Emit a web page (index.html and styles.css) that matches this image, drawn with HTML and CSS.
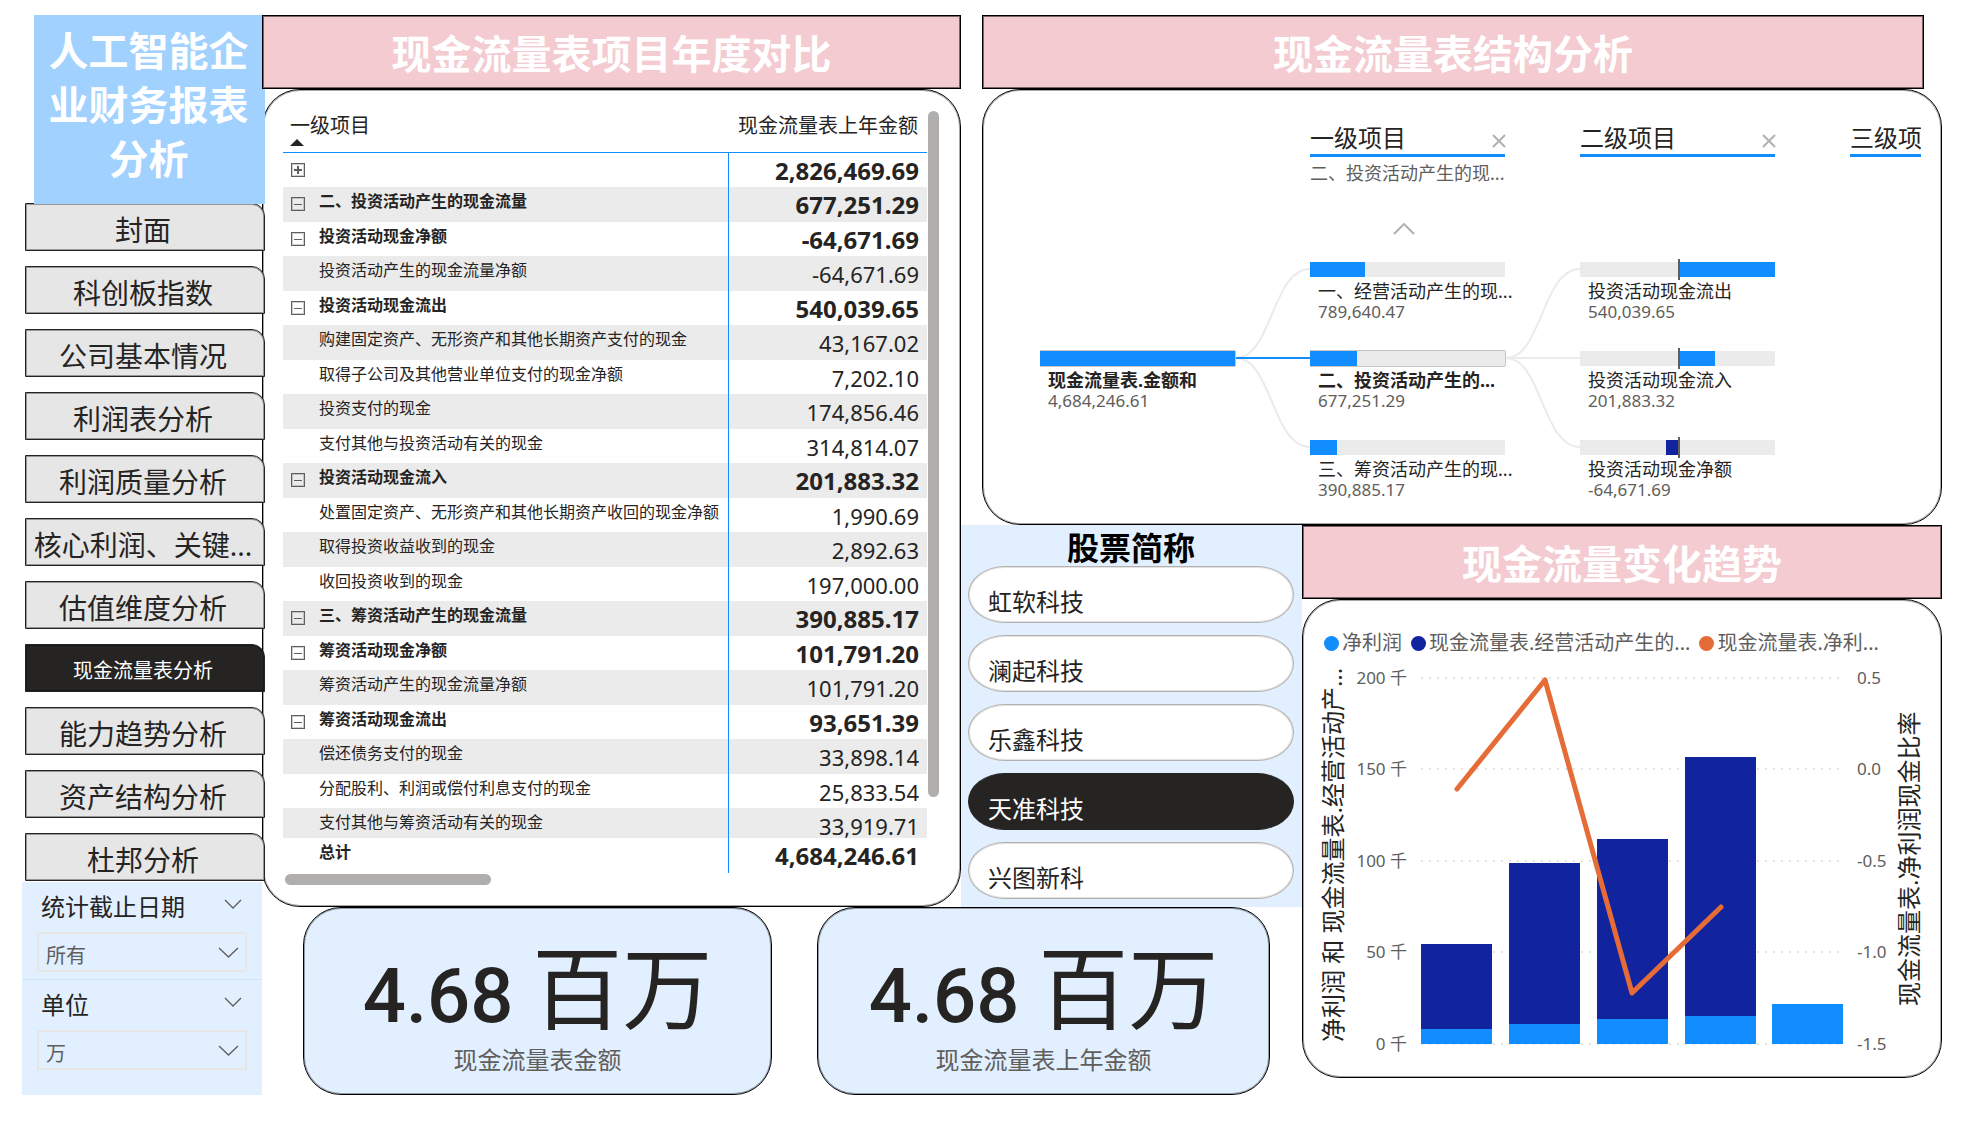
FILE: index.html
```html
<!DOCTYPE html>
<html lang="zh-CN">
<head>
<meta charset="utf-8">
<meta name="viewport" content="width=device-width, initial-scale=1">
<title>人工智能企业财务报表分析</title>
<link rel="stylesheet" href="styles.css">
</head>
<body>
<div class="page">
  <aside class="sidebar">
    <h1 class="brand">人工智能企业财务报表分析</h1>
    <nav class="nav">
      <button type="button" class="nav-item">封面</button>
      <button type="button" class="nav-item">科创板指数</button>
      <button type="button" class="nav-item">公司基本情况</button>
      <button type="button" class="nav-item">利润表分析</button>
      <button type="button" class="nav-item">利润质量分析</button>
      <button type="button" class="nav-item">核心利润、关键...</button>
      <button type="button" class="nav-item">估值维度分析</button>
      <button type="button" class="nav-item is-active">现金流量表分析</button>
      <button type="button" class="nav-item">能力趋势分析</button>
      <button type="button" class="nav-item">资产结构分析</button>
      <button type="button" class="nav-item">杜邦分析</button>
    </nav>
    <div class="filters">
      <div class="filter">
        <div class="filter-head">
          <label for="date">统计截止日期</label>
          <svg width="18" height="10" viewBox="0 0 18 10"><path d="M1 1l8 8 8-8"/></svg>
        </div>
        <div class="select-box">
          <select id="date"><option>所有</option></select>
          <svg width="21" height="11" viewBox="0 0 21 11"><path d="M1 1l9.500 9L20 1"/></svg>
        </div>
      </div>
      <div class="filter">
        <div class="filter-head">
          <label for="unit">单位</label>
          <svg width="18" height="10" viewBox="0 0 18 10"><path d="M1 1l8 8 8-8"/></svg>
        </div>
        <div class="select-box">
          <select id="unit"><option>万</option></select>
          <svg width="21" height="11" viewBox="0 0 21 11"><path d="M1 1l9.500 9L20 1"/></svg>
        </div>
      </div>
    </div>
  </aside>

  <main class="board">
    <section class="compare">
      <h2 class="banner">现金流量表项目年度对比</h2>
      <div class="panel compare-panel">
        <table class="matrix">
          <colgroup><col class="col-toggle"><col><col class="col-value"></colgroup>
          <thead>
            <tr>
              <th colspan="2" scope="col">一级项目<svg width="14" height="7" viewBox="0 0 14 7"><path d="M0 7l7-7 7 7z"/></svg></th>
              <th scope="col" class="value">现金流量表上年金额</th>
            </tr>
          </thead>
          <tbody>
            <tr class="group"><td><button type="button" class="toggle plus" aria-label="展开"></button></td><th scope="row"></th><td class="value">2,826,469.69</td></tr>
            <tr class="group"><td><button type="button" class="toggle" aria-label="折叠"></button></td><th scope="row">二、投资活动产生的现金流量</th><td class="value">677,251.29</td></tr>
            <tr class="group"><td><button type="button" class="toggle" aria-label="折叠"></button></td><th scope="row">投资活动现金净额</th><td class="value">-64,671.69</td></tr>
            <tr><td></td><th scope="row">投资活动产生的现金流量净额</th><td class="value">-64,671.69</td></tr>
            <tr class="group"><td><button type="button" class="toggle" aria-label="折叠"></button></td><th scope="row">投资活动现金流出</th><td class="value">540,039.65</td></tr>
            <tr><td></td><th scope="row">购建固定资产、无形资产和其他长期资产支付的现金</th><td class="value">43,167.02</td></tr>
            <tr><td></td><th scope="row">取得子公司及其他营业单位支付的现金净额</th><td class="value">7,202.10</td></tr>
            <tr><td></td><th scope="row">投资支付的现金</th><td class="value">174,856.46</td></tr>
            <tr><td></td><th scope="row">支付其他与投资活动有关的现金</th><td class="value">314,814.07</td></tr>
            <tr class="group"><td><button type="button" class="toggle" aria-label="折叠"></button></td><th scope="row">投资活动现金流入</th><td class="value">201,883.32</td></tr>
            <tr><td></td><th scope="row">处置固定资产、无形资产和其他长期资产收回的现金净额</th><td class="value">1,990.69</td></tr>
            <tr><td></td><th scope="row">取得投资收益收到的现金</th><td class="value">2,892.63</td></tr>
            <tr><td></td><th scope="row">收回投资收到的现金</th><td class="value">197,000.00</td></tr>
            <tr class="group"><td><button type="button" class="toggle" aria-label="折叠"></button></td><th scope="row">三、筹资活动产生的现金流量</th><td class="value">390,885.17</td></tr>
            <tr class="group"><td><button type="button" class="toggle" aria-label="折叠"></button></td><th scope="row">筹资活动现金净额</th><td class="value">101,791.20</td></tr>
            <tr><td></td><th scope="row">筹资活动产生的现金流量净额</th><td class="value">101,791.20</td></tr>
            <tr class="group"><td><button type="button" class="toggle" aria-label="折叠"></button></td><th scope="row">筹资活动现金流出</th><td class="value">93,651.39</td></tr>
            <tr><td></td><th scope="row">偿还债务支付的现金</th><td class="value">33,898.14</td></tr>
            <tr><td></td><th scope="row">分配股利、利润或偿付利息支付的现金</th><td class="value">25,833.54</td></tr>
            <tr class="last"><td></td><th scope="row">支付其他与筹资活动有关的现金</th><td class="value">33,919.71</td></tr>
          </tbody>
          <tfoot>
            <tr class="group"><td></td><th scope="row">总计</th><td class="value">4,684,246.61</td></tr>
          </tfoot>
        </table>
        <div class="scroll-y"></div>
        <div class="scroll-x"></div>
      </div>
    </section>

    <section class="structure">
      <h2 class="banner">现金流量表结构分析</h2>
      <div class="panel tree-panel">
        <div class="tree">
          <div class="level-head blank"></div>
          <div></div>
          <div class="level-head">
            <div class="level-title"><h3>一级项目</h3><button type="button" class="close" aria-label="移除"><svg width="14" height="14" viewBox="0 0 14 14"><path d="M1 1l12 12M13 1L1 13"/></svg></button></div>
            <p>二、投资活动产生的现...</p>
            <button type="button" class="up" aria-label="向上"><svg width="22" height="12" viewBox="0 0 22 12"><path d="M1 11L11 1l10 10"/></svg></button>
          </div>
          <div></div>
          <div class="level-head">
            <div class="level-title"><h3>二级项目</h3><button type="button" class="close" aria-label="移除"><svg width="14" height="14" viewBox="0 0 14 14"><path d="M1 1l12 12M13 1L1 13"/></svg></button></div>
          </div>
          <div></div>
          <div class="level-head">
            <div class="level-title"><h3>三级项目</h3></div>
          </div>

          <div class="nodes">
            <div class="node is-selected"><div class="bar"><span class="fill" style="width:100%"></span></div><strong>现金流量表.金额和</strong><span class="amount">4,684,246.61</span></div>
          </div>
          <svg class="links" width="75" height="237" viewBox="0 0 75 237"><path d="M1 96C37 96 37 7 75 7M1 96C37 96 37 185 75 185"/><path class="active" d="M1 96H75"/></svg>
          <div class="nodes">
            <div class="node"><div class="bar"><span class="fill" style="width:28%"></span></div><span>一、经营活动产生的现...</span><span class="amount">789,640.47</span></div>
            <div class="node is-selected"><div class="bar"><span class="fill" style="width:24%"></span></div><strong>二、投资活动产生的...</strong><span class="amount">677,251.29</span></div>
            <div class="node"><div class="bar"><span class="fill" style="width:14%"></span></div><span>三、筹资活动产生的现...</span><span class="amount">390,885.17</span></div>
          </div>
          <svg class="links" width="75" height="237" viewBox="0 0 75 237"><path d="M1 96C37 96 37 7 75 7M1 96H75M1 96C37 96 37 185 75 185"/></svg>
          <div class="nodes">
            <div class="node"><div class="bar signed"><span class="fill" style="margin-left:51%;width:49%"></span></div><span>投资活动现金流出</span><span class="amount">540,039.65</span></div>
            <div class="node"><div class="bar signed"><span class="fill" style="margin-left:51%;width:18%"></span></div><span>投资活动现金流入</span><span class="amount">201,883.32</span></div>
            <div class="node"><div class="bar signed"><span class="fill negative" style="margin-left:44%;width:7%"></span></div><span>投资活动现金净额</span><span class="amount">-64,671.69</span></div>
          </div>
        </div>
      </div>
    </section>

    <section class="stocks">
      <h2>股票简称</h2>
      <button type="button" class="pill">虹软科技</button>
      <button type="button" class="pill">澜起科技</button>
      <button type="button" class="pill">乐鑫科技</button>
      <button type="button" class="pill is-active">天准科技</button>
      <button type="button" class="pill">兴图新科</button>
    </section>

    <section class="trend">
      <h2 class="banner">现金流量变化趋势</h2>
      <div class="panel trend-panel">
        <ul class="legend">
          <li class="profit">净利润</li>
          <li class="operating">现金流量表.经营活动产生的...</li>
          <li class="ratio">现金流量表.净利...</li>
        </ul>
        <svg class="chart" viewBox="0 0 638 400">
          <path class="grid" d="M118 20H541M118 111H541M118 203H541M118 294H541M118 386H541"/>
          <g class="operating">
            <rect x="118" y="286" width="71" height="85"/>
            <rect x="206" y="205" width="71" height="161"/>
            <rect x="294" y="181" width="71" height="180"/>
            <rect x="382" y="99" width="71" height="259"/>
          </g>
          <g class="profit">
            <rect x="118" y="371" width="71" height="15"/>
            <rect x="206" y="366" width="71" height="20"/>
            <rect x="294" y="361" width="71" height="25"/>
            <rect x="382" y="358" width="71" height="28"/>
            <rect x="469" y="346" width="71" height="40"/>
          </g>
          <polyline class="ratio" points="154,131 242,22 329,335 418,249"/>
          <g class="ticks left">
            <text x="104" y="26">200 千</text>
            <text x="104" y="117">150 千</text>
            <text x="104" y="209">100 千</text>
            <text x="104" y="300">50 千</text>
            <text x="104" y="392">0 千</text>
          </g>
          <g class="ticks">
            <text x="554" y="26">0.5</text>
            <text x="554" y="117">0.0</text>
            <text x="554" y="209">-0.5</text>
            <text x="554" y="300">-1.0</text>
            <text x="554" y="392">-1.5</text>
          </g>
          <text class="axis" transform="translate(39 384) rotate(-90)">净利润 和 现金流量表.经营活动产...</text>
          <text class="axis" transform="translate(615 348) rotate(-90)">现金流量表.净利润现金比率</text>
        </svg>
      </div>
    </section>

    <section class="cards">
      <div class="card"><div class="figure">4.68 <span>百万</span></div><div class="caption">现金流量表金额</div></div>
      <div class="card"><div class="figure">4.68 <span>百万</span></div><div class="caption">现金流量表上年金额</div></div>
    </section>
  </main>
</div>
</body>
</html>
```
FILE: styles.css
```css
:root {
  --ink: #252423;
  --muted: #605e5c;
  --blue: #118dff;
  --navy: #12239e;
  --orange: #e66c37;
  --pale: #e1efff;
  --track: #ebebeb;
  --soft-edge: inset 0 0 0 1px rgba(0, 0, 0, .35);
}

* { box-sizing: border-box; }

body {
  margin: 0;
  background: #fff;
  color: var(--ink);
  font-family: "Noto Sans", "Noto Sans CJK SC", sans-serif;
}

h1, h2, h3, p, ul { margin: 0; padding: 0; }
ul { list-style: none; }
button, select { font: inherit; color: inherit; }
button { padding: 0; cursor: pointer; }
svg { display: block; flex: none; fill: none; }

.page {
  display: flex;
  padding: 15px 33px 26px 22px;
}

/* Sidebar */
.sidebar {
  position: relative;
  z-index: 1;
  display: flex;
  flex-direction: column;
  flex: none;
  width: 243px;
  margin-right: -3px;
}

.brand {
  position: relative;
  z-index: 1;
  height: 189px;
  margin-left: 12px;
  padding: 9px 16px 0 14px;
  background: #a0d1ff;
  color: #fff;
  font-size: 40px;
  line-height: 54px;
  text-align: center;
}

.nav {
  display: flex;
  flex-direction: column;
  gap: 15px;
  margin: -1px 0 1px 3px;
}

.nav-item {
  height: 48px;
  padding: 6px 4px 0 0;
  border: 1px solid var(--ink);
  border-radius: 0 13px 0 0;
  box-shadow: var(--soft-edge);
  background: #e6e6e6;
  font-size: 28px;
  line-height: 40px;
  white-space: nowrap;
}

.nav-item.is-active {
  background: var(--ink);
  color: #fff;
  font-size: 20px;
}

.filters {
  display: flex;
  flex-direction: column;
  flex: 1;
  margin-right: 3px;
  background: var(--pale);
}

.filter { padding: 13px 15px 7px; }
.filter:first-child { border-bottom: 1px solid #cfe4fb; }

.filter-head {
  display: flex;
  justify-content: space-between;
  margin-bottom: 13px;
  padding: 0 5px 0 4px;
  font-size: 24px;
  line-height: 24px;
}

.filter-head svg { margin-top: 4px; }

.filters svg { stroke: var(--muted); stroke-width: 1.3; }

.select-box { position: relative; }

.select-box select {
  display: block;
  width: 100%;
  height: 40px;
  padding: 6px 7px 0;
  border: 2px solid #e6e6e6;
  border-radius: 0;
  appearance: none;
  background: transparent;
  color: var(--muted);
  font-size: 20px;
}

.select-box svg {
  position: absolute;
  top: 15px;
  right: 8px;
  pointer-events: none;
}

/* Board */
.board {
  display: grid;
  flex: 1;
  grid-template-columns: 699fr 341fr 640fr;
  grid-template-rows: minmax(510px, auto) minmax(382px, auto) minmax(188px, auto);
  grid-template-areas:
    "compare structure structure"
    "compare stocks trend"
    "cards cards trend";
  min-width: 0;
}

.banner {
  display: flex;
  align-items: center;
  justify-content: center;
  height: 74px;
  padding-top: 4px;
  border: 1px solid #000;
  box-shadow: inset 0 0 0 1px rgba(0, 0, 0, .5);
  background: #f3cbd0;
  color: #fff;
  font-size: 40px;
  line-height: 54px;
}

.panel {
  border: 1px solid #000;
  border-radius: 38px;
  box-shadow: var(--soft-edge);
  background: #fff;
}

/* Year comparison matrix */
.compare {
  grid-area: compare;
  display: flex;
  flex-direction: column;
  min-width: 0;
}

.compare .banner { position: relative; z-index: 2; }

.compare-panel {
  display: grid;
  flex: 1;
  grid-template-columns: 1fr 11px;
  grid-template-rows: auto auto 1fr;
  gap: 1px;
  padding: 21px 21px 0 20px;
}

.matrix {
  width: 100%;
  border-spacing: 0;
  table-layout: fixed;
}

.col-toggle { width: 36px; }
.col-value { width: 198px; }

.matrix th, .matrix td {
  padding: 0;
  vertical-align: top;
  font-weight: 400;
  text-align: left;
}

.matrix thead th {
  height: 42px;
  padding: 2px 9px 0 7px;
  border-bottom: 1px solid var(--blue);
  font-size: 20px;
  line-height: 26px;
}

.matrix thead svg { fill: var(--ink); }

.matrix tr { height: 35px; }
.matrix tbody tr:nth-child(odd) { height: 34px; }
.matrix tbody tr.last { height: 30px; }
.matrix tbody tr:nth-child(even) { background: var(--track); }

.matrix tbody th, .matrix tfoot th {
  padding-top: 3px;
  border-right: 1px solid var(--blue);
  font-size: 16px;
  line-height: 22px;
  white-space: nowrap;
}

.matrix .value { text-align: right; }

.matrix td.value {
  padding: 7px 8px 0;
  font-size: 22px;
  line-height: 22px;
}

.matrix .group th { font-weight: 700; }
.matrix .group td.value { font-size: 24px; font-weight: 700; }

.toggle {
  display: block;
  width: 14px;
  height: 14px;
  margin: 10px 0 0 8px;
  border: 1px solid var(--muted);
  box-shadow: inset 0 0 0 1px rgba(96, 94, 92, .3);
  background: linear-gradient(var(--muted), var(--muted)) center / 8px 1px no-repeat;
}

.toggle.plus {
  background:
    linear-gradient(var(--muted), var(--muted)) center / 8px 2px no-repeat,
    linear-gradient(var(--muted), var(--muted)) center / 2px 8px no-repeat;
}

.scroll-y, .scroll-x { border-radius: 6px; background: #b0afad; }
.scroll-y { height: 90%; }
.scroll-x { width: 32%; height: 11px; margin-left: 2px; }

/* Decomposition tree */
.structure {
  grid-area: structure;
  display: flex;
  flex-direction: column;
  min-width: 0;
  margin-left: 21px;
}

.structure .banner { margin-right: 18px; }

.tree-panel {
  flex: 1;
  padding: 24px 20px 0 57px;
}

.tree {
  display: grid;
  grid-template-columns: 195px 75px 195px 75px 195px 75px 195px;
  grid-template-rows: 148px auto;
  overflow: hidden;
}

.level-title {
  display: flex;
  align-items: center;
  justify-content: space-between;
  height: 43px;
  padding-top: 8px;
  border-bottom: 3px solid var(--blue);
}

.level-title h3 {
  font-size: 24px;
  font-weight: 400;
  line-height: 30px;
  white-space: nowrap;
}

.close, .up { border: 0; background: none; }
.close { margin: 5px -1px 0 0; }
.close svg, .up svg { stroke: #b3b0ad; stroke-width: 2; }
.up { display: block; margin: 38px 0 0 83px; }

.level-head p {
  padding-top: 4px;
  color: var(--muted);
  font-size: 18px;
  line-height: 24px;
  white-space: nowrap;
}

.nodes {
  display: flex;
  flex-direction: column;
  justify-content: center;
  gap: 30px;
}

.node {
  display: flex;
  flex-direction: column;
  font-size: 18px;
  line-height: 24px;
  white-space: nowrap;
}

.node > span, .node > strong { padding-left: 8px; }

.node .amount {
  color: var(--muted);
  font-size: 17px;
  line-height: 18px;
}

.bar {
  position: relative;
  height: 15px;
  margin-bottom: 2px;
  background: var(--track);
}

.is-selected .bar { box-shadow: 1px 0 0 #c8c6c4, 0 1px 0 #c8c6c4, 0 -1px 0 #c8c6c4; }
.fill { display: block; height: 15px; background: var(--blue); }
.fill.negative { background: var(--navy); }

.signed::after {
  content: "";
  position: absolute;
  top: -3px;
  left: 50%;
  width: 2px;
  height: 21px;
  background: var(--muted);
}

.links { stroke: var(--track); stroke-width: 2; }
.links .active { stroke: var(--blue); }

/* Stock slicer */
.stocks {
  grid-area: stocks;
  display: flex;
  flex-direction: column;
  gap: 12px;
  padding: 5px 8px 8px 7px;
  background: var(--pale);
}

.stocks h2 {
  margin-bottom: -12px;
  color: #000;
  font-size: 32px;
  line-height: 36px;
  text-align: center;
}

.pill {
  height: 57px;
  padding: 15px 19px 0;
  border: 1px solid #b3b0ad;
  border-radius: 37px / 50%;
  box-shadow: inset 0 0 0 1px rgba(179, 176, 173, .35);
  background: #fff;
  font-size: 24px;
  line-height: 36px;
  text-align: left;
}

.pill.is-active {
  border-color: var(--ink);
  box-shadow: none;
  background: var(--ink);
  color: #fff;
}

/* Trend chart */
.trend {
  grid-area: trend;
  display: flex;
  flex-direction: column;
  min-width: 0;
  margin-bottom: 17px;
}

.trend-panel { flex: 1; padding-top: 28px; }

.legend {
  display: flex;
  gap: 9px;
  padding-left: 21px;
  color: var(--muted);
  font-size: 20px;
  line-height: 30px;
  white-space: nowrap;
}

.legend li {
  display: flex;
  align-items: center;
  gap: 3px;
}

.legend li::before {
  content: "";
  width: 15px;
  height: 15px;
  border-radius: 50%;
}

.legend .profit::before { background: var(--blue); }
.legend .operating::before { background: var(--navy); }
.legend .ratio::before { background: var(--orange); }

.chart { width: 100%; }
.chart .grid { stroke: #c8c6c4; stroke-dasharray: 2 6; }
.chart .operating { fill: var(--navy); }
.chart .profit { fill: var(--blue); }

.chart .ratio {
  stroke: var(--orange);
  stroke-width: 5;
  stroke-linecap: round;
  stroke-linejoin: round;
}

.ticks { fill: var(--muted); font-size: 17px; }
.ticks.left { text-anchor: end; }
.axis { fill: var(--ink); font-size: 24px; }

/* Key figures */
.cards {
  grid-area: cards;
  display: grid;
  grid-template-columns: 469fr 453fr;
  gap: 45px;
  padding: 0 32px 0 41px;
}

.card {
  display: flex;
  flex-direction: column;
  align-items: center;
  padding-top: 34px;
  border: 1px solid #000;
  border-radius: 38px;
  box-shadow: var(--soft-edge);
  background: var(--pale);
}

.figure {
  font-family: Roboto, "Noto Sans CJK SC", sans-serif;
  font-size: 76px;
  font-weight: 500;
  line-height: 100px;
  white-space: nowrap;
}

.figure span { font-size: 90px; font-weight: 400; }

.caption {
  color: var(--muted);
  font-size: 24px;
  line-height: 28px;
}
```
